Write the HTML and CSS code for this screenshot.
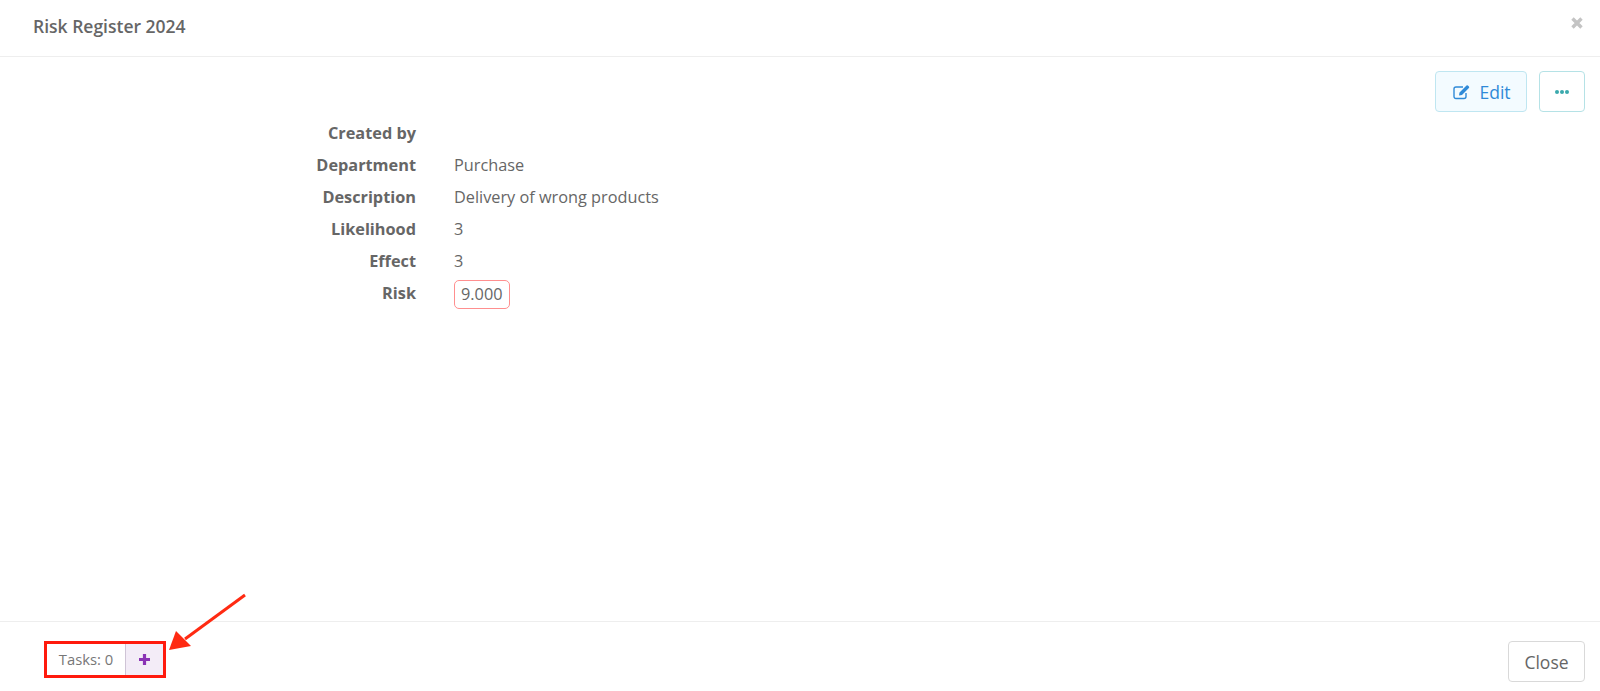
FILE: index.html
```html
<!DOCTYPE html>
<html lang="en">
<head>
<meta charset="utf-8">
<title>Risk Register 2024</title>
<link rel="stylesheet" href="styles.css">
</head>
<body>
<div class="modal">
  <header class="modal-header">
    <h1 class="modal-title">Risk Register 2024</h1>
    <span class="modal-x">
      <svg width="14" height="14" viewBox="0 0 14 14"><path d="M2.5 2.5l9 9M11.5 2.5l-9 9" stroke="#c4c4c4" stroke-width="3.4" fill="none"/></svg>
    </span>
  </header>
  <main class="modal-body">
    <div class="actions">
      <button class="btn btn-edit">
        <svg class="edit-icon" width="18" height="16" viewBox="0 0 18 16"><path d="M13 9v3.5a2 2 0 0 1-2 2H3a2 2 0 0 1-2-2V5a2 2 0 0 1 2-2h7" stroke="#2f8ad8" stroke-width="1.4" fill="none"/><path d="M6.5 8.5L13.5 1.5a1 1 0 0 1 1.4 0l1 1a1 1 0 0 1 0 1.4L9 11l-3 .5z" fill="#2f8ad8"/></svg>
        Edit
      </button>
      <button class="btn btn-more">
        <svg width="14" height="4" viewBox="0 0 14 4"><circle cx="2" cy="2" r="2" fill="#3aa9ad"/><circle cx="7" cy="2" r="2" fill="#3aa9ad"/><circle cx="12" cy="2" r="2" fill="#3aa9ad"/></svg>
      </button>
    </div>
    <dl class="details">
      <dt>Created by</dt><dd></dd>
      <dt>Department</dt><dd>Purchase</dd>
      <dt>Description</dt><dd>Delivery of wrong products</dd>
      <dt>Likelihood</dt><dd>3</dd>
      <dt>Effect</dt><dd>3</dd>
      <dt>Risk</dt><dd><span class="risk">9.000</span></dd>
    </dl>
  </main>
  <footer class="modal-footer">
    <div class="tasks">
      <span class="tasks-label">Tasks: 0</span>
      <span class="tasks-add">
        <svg width="13" height="13" viewBox="0 0 13 13"><path d="M6.5 1v11M1 6.5h11" stroke="#8a33b5" stroke-width="3.2" fill="none"/></svg>
      </span>
    </div>
    <button class="btn btn-close">Close</button>
  </footer>
  <svg class="arrow" width="90" height="70" viewBox="0 0 90 70"><path d="M78 2L18 46" stroke="#ff2a12" stroke-width="3" fill="none"/><path d="M2 57L9 38L24 53z" fill="#ff2a12"/></svg>
</div>
</body>
</html>
```
FILE: styles.css
```css
* { box-sizing: border-box; }
html, body { margin: 0; height: 100%; }
body {
  background: #fff;
  color: #666666;
  font-family: "Open Sans", sans-serif;
  font-size: 16.3px;
  overflow: hidden;
}
.modal {
  position: relative;
  height: 691px;
  display: flex;
  flex-direction: column;
}
.modal-header {
  height: 57px;
  flex: none;
  border-bottom: 1px solid #eeeeee;
  display: flex;
  align-items: center;
  justify-content: space-between;
  padding: 0 16px 5px 33px;
}
.modal-title {
  margin: 0;
  font-size: 17.5px;
  font-weight: 600;
  color: #666666;
}
.modal-x { display: flex; margin-bottom: 5px; }
.modal-body {
  flex: 1;
  padding: 14px 15px 0 0;
  display: flex;
  flex-direction: column;
}
.actions {
  display: flex;
  justify-content: flex-end;
  gap: 12px;
}
.btn {
  font-family: inherit;
  font-size: 17.5px;
  height: 41px;
  border-radius: 4px;
  background: #fff;
  padding: 0;
  display: flex;
  align-items: center;
  justify-content: center;
}
.btn-edit {
  width: 92px;
  gap: 8px;
  padding-left: 2px;
  color: #2f8ad8;
  background: #f3fbff;
  border: 1px solid #bfe6f1;
}
.btn-more {
  width: 46px;
  border: 1px solid #b5e2e6;
}
.details {
  margin: 5px 0 0;
  display: grid;
  grid-template-columns: 416px 1fr;
  column-gap: 38px;
  grid-auto-rows: 32px;
  line-height: 32px;
}
.details dt {
  font-weight: 700;
  text-align: right;
  color: #666666;
}
.details dd { margin: 0; }
.risk {
  display: inline-block;
  height: 29px;
  line-height: 27px;
  margin-top: 3px;
  padding: 0 6px;
  border: 1px solid #ff8f8f;
  border-radius: 5px;
  vertical-align: top;
}
.modal-footer {
  height: 70px;
  flex: none;
  border-top: 1px solid #eeeeee;
  display: flex;
  justify-content: space-between;
  align-items: flex-start;
  padding: 19px 15px 0 44px;
}
.tasks {
  width: 122px;
  height: 37px;
  border: 3px solid #ff1a0d;
  display: flex;
  font-size: 14.8px;
  color: #777777;
}
.tasks-label {
  width: 78px;
  display: flex;
  align-items: center;
  justify-content: center;
  padding-bottom: 1px;
}
.tasks-add {
  flex: 1;
  display: flex;
  align-items: center;
  justify-content: center;
  background: #f3ecf7;
  border-left: 1px solid #cfc4d6;
}
.btn-close {
  width: 77px;
  border: 1px solid #d9d9d9;
  color: #666666;
}
.arrow {
  position: absolute;
  left: 167px;
  top: 593px;
}
```
